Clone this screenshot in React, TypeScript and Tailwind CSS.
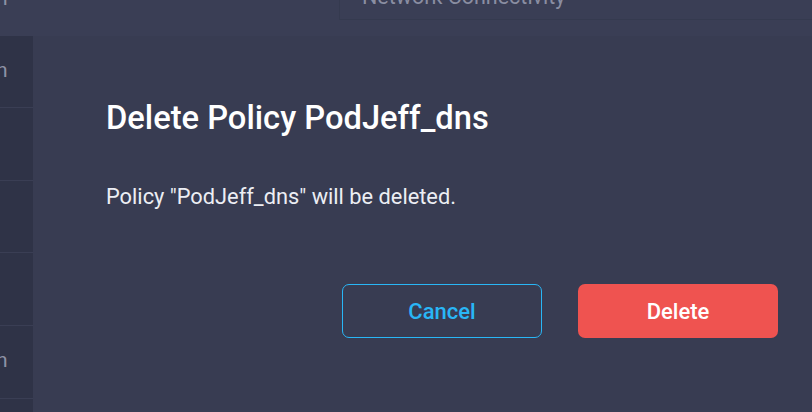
import React from "react";

const rows = [
  { label: "n", h: "h-[72px]" },
  { label: "", h: "h-[73px]" },
  { label: "", h: "h-[72px]" },
  { label: "", h: "h-[73px]" },
  { label: "n", h: "h-[73px]" },
];

const App = () => {
  return (
    <div className="w-[812px] h-[412px] overflow-hidden bg-[#3a3e55] flex flex-col font-['Roboto',sans-serif]">
      {/* page header behind the dialog */}
      <div className="h-[36px] flex shrink-0">
        <div className="w-[33px] text-[21px] leading-none text-[#8e92a6] -mt-[12px] -ml-[4px]">n</div>
        <div className="ml-[310px] flex-1 h-[20px] border-l border-b border-[#353a4f] flex">
          <span className="ml-[22px] -mt-[14px] text-[21.5px] leading-none text-[#8a8ea2]">
            Network Connectivity
          </span>
        </div>
      </div>

      <div className="flex flex-1">
        <div className="w-[33px] bg-[#2f3347] flex flex-col shrink-0">
          {rows.map((r, i) => (
            <div
              key={i}
              className={`${r.h} border-b border-[#3a3e54] flex items-center text-[21px] text-[#8e92a6] -ml-[4px] pb-[2px]`}
            >
              {r.label}
            </div>
          ))}
        </div>

        <div className="flex-1 bg-[#383c52] mb-[2px] flex flex-col">
          <h2 className="pl-[73px] pt-[62px] text-[32.7px] leading-[40px] font-medium text-white">
            Delete Policy PodJeff_dns
          </h2>
          <p className="pl-[73px] mt-[45px] text-[21.8px] leading-[28px] text-[#eceef4]">
            Policy "PodJeff_dns" will be deleted.
          </p>
          <div className="flex justify-end gap-[36px] pr-[34px] mt-[73px]">
            <button className="w-[200px] h-[54px] rounded-[7px] border border-[#29b6f6] text-[#29b6f6] text-[22px] font-medium">
              Cancel
            </button>
            <button className="w-[200px] h-[54px] rounded-[7px] bg-[#ef5350] text-white text-[22px] font-medium">
              Delete
            </button>
          </div>
        </div>
      </div>
    </div>
  );
};

export default App;
